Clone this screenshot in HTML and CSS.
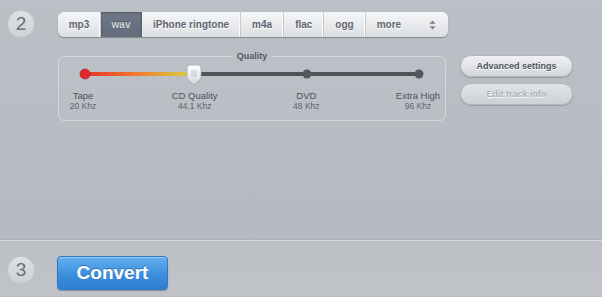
FILE: index.html
```html
<!DOCTYPE html>
<html lang="en">
<head>
    <meta charset="UTF-8">
    <meta name="viewport" content="width=device-width, initial-scale=1.0">
    <title>Convert</title>
    <link rel="stylesheet" href="styles.css">
</head>
<body>
    <!-- Step 2: format and quality -->
    <section class="step step-format">
        <div class="step-num">2</div>
        <div class="step-body">
            <nav class="tabs">
                <a class="tab">mp3</a>
                <a class="tab active">wav</a>
                <a class="tab">iPhone ringtone</a>
                <a class="tab">m4a</a>
                <a class="tab">flac</a>
                <a class="tab">ogg</a>
                <a class="tab more">more
                    <svg class="arrows" viewBox="0 0 7 10" width="7" height="10">
                        <path d="M3.5 0.5 L6.5 3.8 H0.5 Z M3.5 9.5 L6.5 6.2 H0.5 Z" fill="#7a808a"/>
                    </svg>
                </a>
            </nav>

            <div class="options">
                <fieldset class="quality">
                    <legend>Quality</legend>
                    <svg class="slider" viewBox="0 0 386 22" width="386" height="22">
                        <defs>
                            <linearGradient id="fill" x1="26" x2="135" y1="0" y2="0" gradientUnits="userSpaceOnUse">
                                <stop offset="0" stop-color="#e8312c"/>
                                <stop offset="0.45" stop-color="#f0772f"/>
                                <stop offset="1" stop-color="#d8d63e"/>
                            </linearGradient>
                            <linearGradient id="knob" x1="0" x2="0" y1="0" y2="1">
                                <stop offset="0" stop-color="#ffffff"/>
                                <stop offset="1" stop-color="#d4d7db"/>
                            </linearGradient>
                        </defs>
                        <rect x="26" y="8" width="334" height="4" rx="2" fill="#505459"/>
                        <rect x="26" y="8" width="110" height="4" fill="url(#fill)"/>
                        <circle cx="26" cy="10" r="5" fill="#e4272a" stroke="#a8302e" stroke-width="0.8"/>
                        <circle cx="248" cy="10" r="4.5" fill="#55595f"/>
                        <circle cx="360" cy="10" r="4.5" fill="#55595f"/>
                        <path d="M128 4 Q128 1 131 1 H139 Q142 1 142 4 V14.5 L135 21 L128 14.5 Z" fill="url(#knob)" stroke="#a4a9b0" stroke-width="0.8"/>
                        <path d="M133 6 V13 M135 6 V13 M137 6 V13" stroke="#b9bdc3" stroke-width="0.8"/>
                    </svg>
                    <div class="ticks">
                        <div class="tick"><span class="tick-name">Tape</span><span class="tick-rate">20 Khz</span></div>
                        <div class="tick"><span class="tick-name">CD Quality</span><span class="tick-rate">44.1 Khz</span></div>
                        <div class="tick"><span class="tick-name">DVD</span><span class="tick-rate">48 Khz</span></div>
                        <div class="tick"><span class="tick-name">Extra High</span><span class="tick-rate">96 Khz</span></div>
                    </div>
                </fieldset>

                <div class="side-buttons">
                    <button class="pill">Advanced settings</button>
                    <button class="pill" disabled>Edit track info</button>
                </div>
            </div>
        </div>
    </section>

    <!-- Step 3: convert -->
    <section class="step step-convert">
        <div class="step-num">3</div>
        <button class="convert">Convert</button>
    </section>
</body>
</html>
```

FILE: styles.css
```css
* {
    margin: 0;
    padding: 0;
    box-sizing: border-box;
    font-family: "Liberation Sans", Arial, sans-serif;
}

body {
    width: 602px;
    height: 297px;
    overflow: hidden;
    background-color: #b8bdc4;
}

.step {
    display: flex;
    padding-left: 7px;
}

.step-format {
    height: 240px;
    background: linear-gradient(#bbc0c6, #b5bac1);
    border-bottom: 1px solid #aeb3ba;
}

.step-convert {
    height: 56px;
    border-top: 1px solid #d6d9dd;
    background: linear-gradient(#bcc0c6, #c0c3c8);
    align-items: flex-start;
    padding-top: 15px;
}

.step-num {
    width: 28px;
    height: 28px;
    border-radius: 50%;
    background: linear-gradient(#dfe1e4, #cfd2d6);
    border: 1px solid #c2c6cb;
    color: #6a7079;
    font-size: 19px;
    line-height: 26px;
    text-align: center;
    flex-shrink: 0;
}

.step-format .step-num {
    margin-top: 10px;
}

.step-body {
    margin-left: 23px;
    padding-top: 12px;
}

/* Format tabs */
.tabs {
    display: flex;
    height: 25px;
    width: 390px;
    border-radius: 6px;
    background: linear-gradient(#f6f7f8, #dcdee2);
    box-shadow: 0 1px 1px rgba(60, 66, 76, 0.45);
    overflow: hidden;
}

.tab {
    display: flex;
    align-items: center;
    justify-content: center;
    padding: 0 11px;
    font-size: 10px;
    font-weight: bold;
    color: #5e6570;
    text-shadow: 0 1px 0 #fff;
    border-right: 1px solid #c6c9ce;
    box-shadow: inset -1px 0 0 #fbfbfc;
}

.tab:first-child {
    width: 43px;
}

.tab.active {
    width: 41px;
    background: linear-gradient(#6f7886, #636c7a);
    color: #cfd3d9;
    text-shadow: 0 -1px 0 #4b525d;
    border-right-color: #5a616d;
    box-shadow: inset 0 1px 2px rgba(0, 0, 0, 0.3);
}

.tab.more {
    flex: 1;
    justify-content: space-between;
    padding: 0 12px 0 11px;
    border-right: none;
    box-shadow: none;
}

.arrows {
    display: block;
}

/* Quality panel */
.options {
    display: flex;
    align-items: flex-start;
    margin-top: 14px;
}

.quality {
    width: 388px;
    height: 70px;
    border: 1px solid rgba(226, 229, 233, 0.6);
    border-radius: 6px;
    background: rgba(255, 255, 255, 0.04);
}

.quality legend {
    margin: 0 auto;
    padding: 0 5px;
    font-size: 9px;
    font-weight: bold;
    line-height: 10px;
    color: #535962;
}

.slider {
    display: block;
    margin-top: 3px;
}

.ticks {
    display: flex;
    justify-content: space-between;
    margin: 5px 27px 0 24px;
}

.tick {
    width: 0;
    display: flex;
    flex-direction: column;
    align-items: center;
    white-space: nowrap;
}

.tick-name {
    font-size: 9.5px;
    line-height: 10px;
    color: #4c525a;
}

.tick-rate {
    font-size: 8.5px;
    line-height: 10px;
    color: #5e646c;
}

/* Side buttons */
.side-buttons {
    display: flex;
    flex-direction: column;
    gap: 6px;
    margin: 4px 0 0 14px;
}

.pill {
    width: 113px;
    height: 22px;
    border-radius: 11px;
    border: 1px solid #b3b7bd;
    background: linear-gradient(#f0f1f3, #d3d6da);
    box-shadow: 0 1px 1px rgba(90, 96, 106, 0.35);
    font-size: 9px;
    font-weight: bold;
    color: #4d535b;
    text-shadow: 0 1px 0 #fff;
}

.pill:disabled {
    color: #a9aeb5;
    background: linear-gradient(#e2e4e7, #cdd0d4);
}

/* Convert */
.step-convert .step-num {
    margin-top: 0;
}

.convert {
    margin-left: 22px;
    width: 111px;
    height: 34px;
    border-radius: 4px;
    border: 1px solid #3576c2;
    background: linear-gradient(#62b0f0, #3d8fdd 55%, #2f7ed2);
    box-shadow: 0 1px 1px rgba(40, 70, 110, 0.4), inset 0 1px 0 rgba(255, 255, 255, 0.35);
    color: #fff;
    font-size: 19px;
    font-weight: bold;
    text-shadow: 0 -1px 0 rgba(30, 80, 150, 0.6);
}
```
